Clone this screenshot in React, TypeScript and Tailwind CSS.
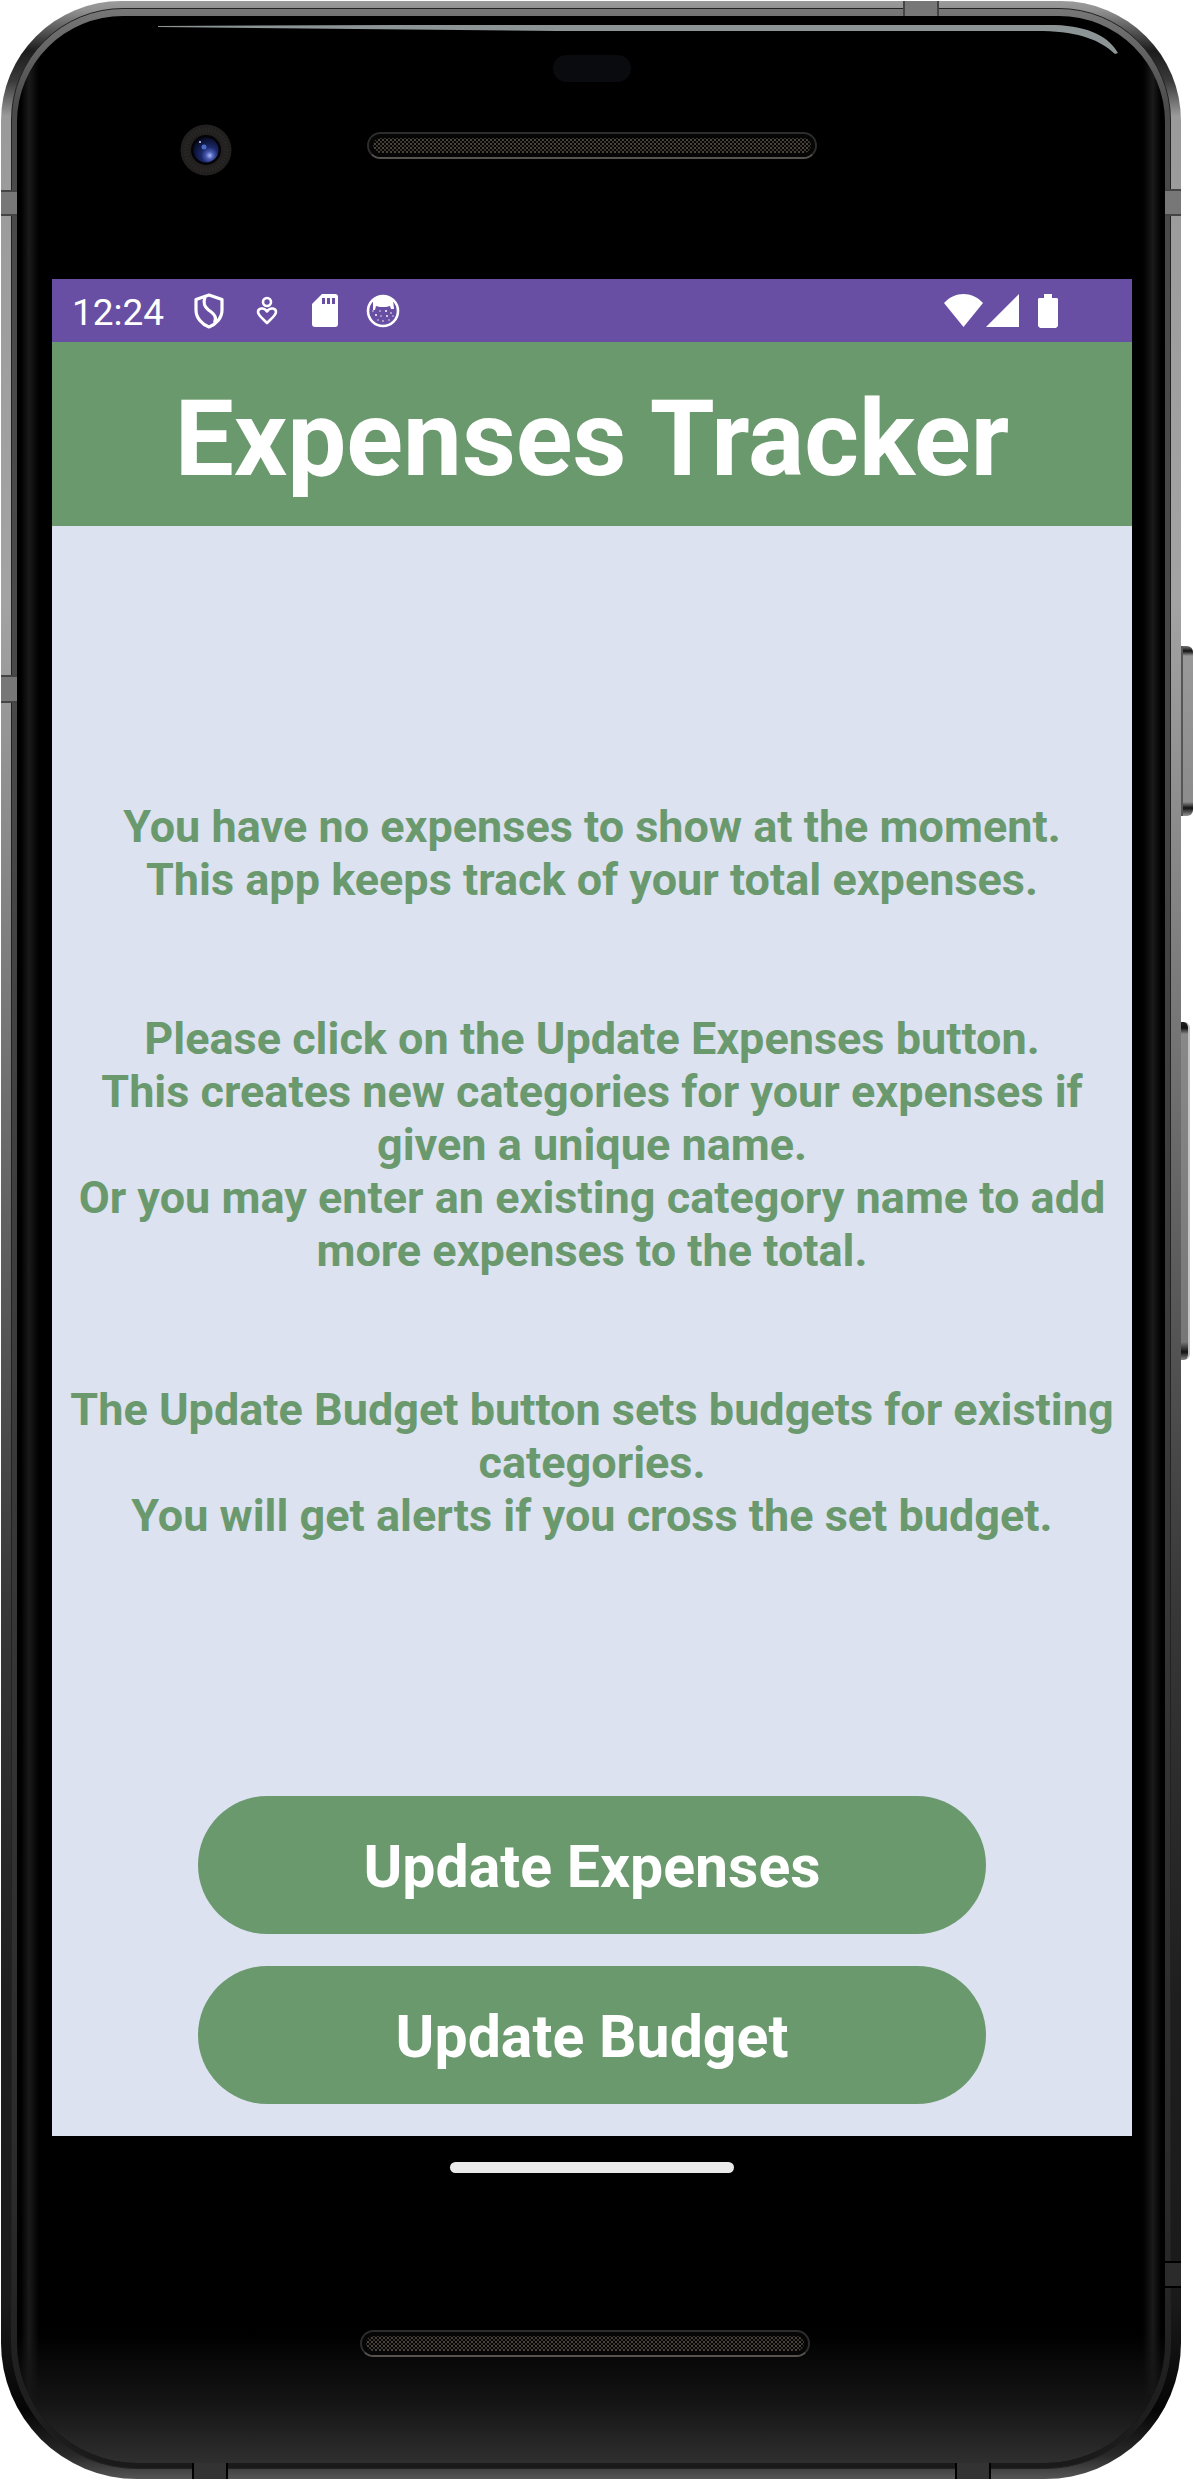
import React from "react";

const messages = [
  ["You have no expenses to show at the moment.", "This app keeps track of your total expenses."],
  [
    "Please click on the Update Expenses button.",
    "This creates new categories for your expenses if given a unique name.",
    "Or you may enter an existing category name to add more expenses to the total.",
  ],
  [
    "The Update Budget button sets budgets for existing categories.",
    "You will get alerts if you cross the set budget.",
  ],
];

function Speaker() {
  return (
    <div className="h-[27px] w-[450px] rounded-full border-2 border-[#2c2c2c] border-b-[#56534e] bg-[#060606] p-1">
      <div className="h-full w-full rounded-full bg-[radial-gradient(circle,#4a443b_1px,transparent_1px),radial-gradient(circle,#3a352e_1px,transparent_1px)] bg-[size:4px_4px] bg-[position:0_0,2px_2px]" />
    </div>
  );
}

function Camera() {
  return (
    <svg viewBox="0 0 52 52" className="size-[52px]" aria-hidden="true">
      <defs>
        <radialGradient id="lens" cx="0.65" cy="0.72" r="0.75">
          <stop offset="0" stopColor="#a9b8f8" />
          <stop offset="0.2" stopColor="#4a5cb4" />
          <stop offset="0.45" stopColor="#1a2868" />
          <stop offset="1" stopColor="#070b22" />
        </radialGradient>
      </defs>
      <circle cx="26" cy="26" r="25.5" fill="#221f1f" />
      <circle cx="26" cy="26" r="20" fill="none" stroke="#2d2929" strokeWidth="5" strokeDasharray="1 2" />
      <circle cx="26" cy="26" r="15" fill="#030308" />
      <circle cx="26" cy="26" r="12.5" fill="url(#lens)" />
      <circle cx="24" cy="23" r="2.5" fill="#4a6cc8" />
      <circle cx="20" cy="18" r="1" fill="#cfd8ff" />
    </svg>
  );
}

function StatusBar() {
  return (
    <div className="flex h-[63px] items-center bg-[#684fa3] pr-[74px] pl-5 text-white">
      <span className="w-[122px] pt-1 text-[37px] leading-[44px]">12:24</span>
      <svg viewBox="0 0 30 36" className="h-9 w-[30px]" fill="none" stroke="#fff" strokeWidth="3.2" strokeLinejoin="round" aria-hidden="true">
        <path d="M15 2 28 6.5V17C28 25 22 31.5 15 34 8 31.5 2 25 2 17V6.5Z" />
        <path d="M11 4C9 10 10 13.5 14.5 17c6.5 4.500 8.500 7.500 6 13" />
      </svg>
      <svg viewBox="0 0 22 30" className="ml-8 h-[30px] w-[22px]" fill="none" stroke="#fff" strokeWidth="2.6" strokeLinejoin="round" aria-hidden="true">
        <circle cx="11" cy="6" r="4" />
        <path d="M11 27C6 22 2 19 2 16c0-4 6-5 9-.5 3-4.500 9-3.500 9 .5 0 3-4 6-9 11Z" />
      </svg>
      <svg viewBox="0 0 26 33" className="ml-[34px] h-[33px] w-[26px]" aria-hidden="true">
        <path fill="#fff" d="M10 0h13a3 3 0 0 1 3 3v27a3 3 0 0 1-3 3H3a3 3 0 0 1-3-3V10Z" />
        <path fill="#684fa3" d="M10 4h3v6h-3zM15 4h3v6h-3zM20 4h3v6h-3z" />
      </svg>
      <svg viewBox="0 0 34 34" className="ml-7 size-[34px]" aria-hidden="true">
        <circle cx="17" cy="17" r="15" fill="none" stroke="#fff" strokeWidth="2.6" />
        <path fill="#fff" d="M7 6C12 0 22 0 27 6l1 9h-3l-1-3-4 1H14l-4-1-1 4H7Z" />
        <g fill="#fff">
          <circle cx="10" cy="21" r="1" /><circle cx="14" cy="17" r=".7" /><circle cx="20" cy="17" r="1" />
          <circle cx="25" cy="19" r=".8" /><circle cx="7" cy="17" r=".7" /><circle cx="15" cy="22" r=".7" />
          <circle cx="21" cy="22" r=".9" /><circle cx="12" cy="26" r=".7" /><circle cx="17" cy="27" r=".8" />
          <circle cx="23" cy="26" r=".7" /><circle cx="27" cy="22" r=".7" />
        </g>
      </svg>
      <svg viewBox="0 0 39 33" className="ml-auto h-[33px] w-[39px]" aria-hidden="true">
        <path fill="#fff" d="M0 9C11-3 28-3 39 9L19.5 33Z" />
      </svg>
      <svg viewBox="0 0 33 33" className="ml-[3px] size-[33px]" aria-hidden="true">
        <path fill="#fff" d="M33 0v33H0Z" />
      </svg>
      <svg viewBox="0 0 20 34" className="ml-[19px] h-[34px] w-5" aria-hidden="true">
        <path fill="#fff" d="M6 0h8v4h5l1 1v27l-2 2H2l-2-2V5l1-1h5Z" />
      </svg>
    </div>
  );
}

function AppScreen() {
  return (
    <main className="flex min-h-[1857px] flex-col bg-[#dce2f0]">
      <StatusBar />
      <h1 className="bg-[#6b996e] pt-[38px] pb-[26px] text-center text-[105px] leading-[120px] font-bold text-white">
        Expenses Tracker
      </h1>
      <div className="flex flex-1 flex-col justify-center gap-[106px] px-4 pt-5 text-center text-[45px] leading-[53px] font-bold text-[#6b996e]">
        {messages.map((lines) => (
          <div key={lines[0]}>
            {lines.map((line) => (
              <p key={line}>{line}</p>
            ))}
          </div>
        ))}
      </div>
      <div className="flex flex-col items-center gap-8 pb-8">
        {["Update Expenses", "Update Budget"].map((label) => (
          <button
            key={label}
            type="button"
            className="h-[138px] w-[73%] rounded-full bg-[#6b996e] pt-1 text-[59px] leading-[68px] font-bold text-white"
          >
            {label}
          </button>
        ))}
      </div>
    </main>
  );
}

export default function App() {
  return (
    <div className="bg-white py-px pr-[13px] pl-px font-[Roboto,sans-serif]">
      <div className="relative rounded-t-[120px] rounded-b-[136px] bg-[linear-gradient(to_bottom,#9b9b9b_0,#8f8f8f_10px,#1c1c1c_50px,#3a3a3a_80px,#9a9a9a_115px,#a3a3a3_600px,#6e6e6e_1100px,#383838_1600px,#1e1e1e_2000px,#1a1a1a_2300px,#050505_2410px,#2a2a2a_2455px,#555_2478px)] px-[10px] pt-[7px] pb-[10px]">
        {/* Side keys */}
        <div className="absolute top-[645px] -right-[12px] h-[170px] w-3 rounded-r-md border-l-2 border-[#555] bg-[linear-gradient(to_bottom,#777_0,#111_5px,#999_10px,#8c8c8c_156px,#111_162px,#999_170px)]" />
        <div className="absolute top-[1021px] -right-[9px] h-[338px] w-[9px] rounded-r-md border-r-2 border-[#c4c4c4] bg-[linear-gradient(to_bottom,#222_0,#111_6px,#888_12px,#777_320px,#111_330px,#888_338px)]" />
        {/* Antenna bands */}
        <div className="absolute top-[189px] left-0 h-[26px] w-4 border-y-2 border-[#444] bg-[#777]" />
        <div className="absolute top-[674px] left-0 h-7 w-4 border-y-2 border-[#444] bg-[#777]" />
        <div className="absolute top-[188px] right-0 h-[27px] w-4 border-y-2 border-[#444] bg-[#777]" />
        <div className="absolute right-0 bottom-[191px] h-[27px] w-4 border-y-2 border-black bg-[#2b2b2b]" />
        <div className="absolute top-0 right-[242px] h-4 w-9 border-x-2 border-[#444] bg-[#777]" />
        <div className="absolute bottom-0 left-[191px] h-4 w-9 border-x-2 border-black bg-[#333]" />
        <div className="absolute right-[190px] bottom-0 h-4 w-9 border-x-2 border-black bg-[#333]" />

        <div className="rounded-t-[112px] rounded-b-[126px] border border-[#222] bg-[linear-gradient(to_bottom,#777_0,#4a4a4a_100px,#484848_700px,#383838_1500px,#2a2a2a_2200px,#1a1a1a_2460px)] px-[5px] pt-[7px] pb-[5px]">
          <div className="relative overflow-hidden rounded-t-[106px] rounded-b-[120px] bg-[linear-gradient(to_right,#000_0,#000_4px,#1a1a1a_12px,#000_22px,#000_calc(100%-22px),#1a1a1a_calc(100%-12px),#000_calc(100%-4px),#000_100%)]">
            <div className="absolute inset-x-0 bottom-0 h-[130px] bg-[linear-gradient(to_bottom,transparent,#151515_55%,#2f2f2f)]" />
            {/* Glass highlight */}
            <svg viewBox="0 0 960 29" className="absolute top-[9px] right-[47px] h-[29px] w-[960px]" aria-hidden="true">
              <path fill="#8c9495" d="M0 1 240 0H897C932 1 952 13 960 28L957 29C942 15 922 7 885 6H400L0 2Z" />
            </svg>
            <div className="relative pr-[33px] pl-[35px]">
              <header className="relative flex h-[263px] flex-col items-center pt-[39px]">
                <div className="h-[27px] w-[78px] rounded-full bg-[#0a0b0f]" />
                <div className="mt-[50px]">
                  <Speaker />
                </div>
                <div className="absolute top-[108px] left-[128px]">
                  <Camera />
                </div>
              </header>
              <AppScreen />
              <footer className="flex h-[327px] flex-col items-center pt-[26px]">
                <div className="h-[11px] w-[284px] rounded-full bg-[#eaeaea]" />
                <div className="mt-[157px] mr-[14px]">
                  <Speaker />
                </div>
              </footer>
            </div>
          </div>
        </div>
      </div>
    </div>
  );
}
